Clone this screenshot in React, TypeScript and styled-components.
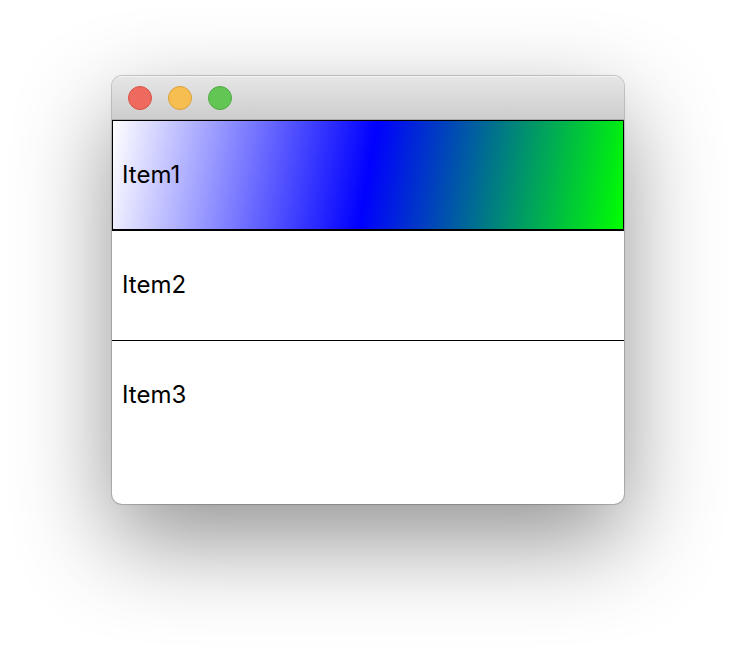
import React, { useState } from "react";
import styled, { createGlobalStyle } from "styled-components";

const GlobalStyle = createGlobalStyle`
  *, *::before, *::after {
    box-sizing: border-box;
  }

  body {
    margin: 0;
    background: #fff;
    color: #000;
    font-family: Inter, "Liberation Sans", sans-serif;
  }
`;

const Desktop = styled.main`
  display: flex;
  min-height: 100vh;
  padding: 76px 112px 148px;
`;

const Window = styled.section`
  display: flex;
  flex: 1;
  flex-direction: column;
  border-radius: 10px;
  background: #fff;
  overflow: hidden;
  box-shadow:
    0 0 0 1px rgba(0, 0, 0, 0.15),
    0 0 2px rgba(0, 0, 0, 0.15),
    0 36px 96px rgba(0, 0, 0, 0.43);
`;

const TitleBar = styled.header`
  display: flex;
  align-items: center;
  gap: 16px;
  height: 44px;
  padding: 0 16px;
  background: linear-gradient(#e6e6e6, #cdcdcd);
  border-bottom: 1px solid #adadad;
  box-shadow: inset 0 1px 0 #f4f4f4;
`;

const WindowButton = styled.button<{ $fill: string; $edge: string }>`
  width: 24px;
  height: 24px;
  padding: 0;
  border: 1px solid ${({ $edge }) => $edge};
  border-radius: 50%;
  background: ${({ $fill }) => $fill};
`;

const List = styled.ul`
  display: flex;
  flex: 1;
  flex-direction: column;
  margin: 0;
  padding: 0;
  list-style: none;
`;

const ListItem = styled.li`
  display: flex;

  & + & {
    border-top: 1px solid #000;
  }
`;

const ItemButton = styled.button<{ $selected: boolean }>`
  flex: 1;
  height: ${({ $selected }) => ($selected ? 110 : 109)}px;
  padding: 0 9px 1px;
  border: 1px solid ${({ $selected }) => ($selected ? "#000" : "transparent")};
  background: ${({ $selected }) =>
    $selected ? "linear-gradient(100deg, #fff, #00f 50%, #0f0)" : "none"};
  color: inherit;
  font: inherit;
  font-size: 24px;
  line-height: 32px;
  text-align: left;
  outline: none;
`;

const controls = [
  { name: "Close", fill: "#ee6a5f", edge: "#d65247" },
  { name: "Minimize", fill: "#f6be50", edge: "#d9a03c" },
  { name: "Zoom", fill: "#62c655", edge: "#51a842" },
];

const items = ["Item1", "Item2", "Item3"];

export default function App() {
  const [selected, setSelected] = useState("Item1");

  return (
    <>
      <GlobalStyle />
      <Desktop>
        <Window>
          <TitleBar>
            {controls.map(({ name, fill, edge }) => (
              <WindowButton key={name} type="button" aria-label={name} $fill={fill} $edge={edge} />
            ))}
          </TitleBar>
          <List>
            {items.map((item) => (
              <ListItem key={item}>
                <ItemButton
                  type="button"
                  aria-pressed={selected === item}
                  $selected={selected === item}
                  onClick={() => setSelected(item)}
                >
                  {item}
                </ItemButton>
              </ListItem>
            ))}
          </List>
        </Window>
      </Desktop>
    </>
  );
}
